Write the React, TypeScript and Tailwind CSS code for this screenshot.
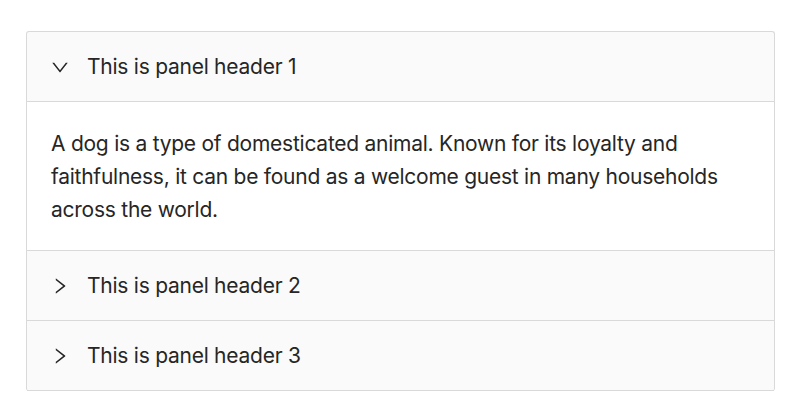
import React, { useState } from 'react';

const panels = [
  {
    key: '1',
    header: 'This is panel header 1',
    text: 'A dog is a type of domesticated animal. Known for its loyalty and faithfulness, it can be found as a welcome guest in many households across the world.',
  },
  {
    key: '2',
    header: 'This is panel header 2',
    text: 'A dog is a type of domesticated animal. Known for its loyalty and faithfulness, it can be found as a welcome guest in many households across the world.',
  },
  {
    key: '3',
    header: 'This is panel header 3',
    text: 'A dog is a type of domesticated animal. Known for its loyalty and faithfulness, it can be found as a welcome guest in many households across the world.',
  },
];

const Arrow: React.FC<{ open: boolean }> = ({ open }) => (
  <svg
    viewBox="64 64 896 896"
    width="18"
    height="18"
    fill="currentColor"
    className={open ? 'rotate-90 transition-transform' : 'transition-transform'}
  >
    <path d="M765.7 486.8L314.9 134.7A7.97 7.97 0 00302 141v77.3c0 4.9 2.3 9.6 6.1 12.6l360 281.1-360 281.1c-3.9 3-6.1 7.7-6.1 12.6V883c0 6.6 7.6 10.3 12.9 6.3l450.8-352.1a31.96 31.96 0 000-50.4z" />
  </svg>
);

export default function App() {
  const [active, setActive] = useState<string | null>('1');

  return (
    <div className="w-[800px] h-[418px] bg-white pt-[31px] pl-[26px] font-['Inter','Liberation_Sans',sans-serif] text-[21px] leading-[33px] tracking-[-0.25px] text-[#262626]">
      {/* collapse */}
      <div className="w-[749px] border border-b-0 border-[#d9d9d9] rounded-[3px] bg-[#fafafa]">
        {panels.map((p) => {
          const open = active === p.key;
          return (
            <div key={p.key} className="border-b border-[#d9d9d9]">
              <button
                onClick={() => setActive(open ? null : p.key)}
                className="w-full flex items-center px-6 pt-[18px] pb-[18px] text-left cursor-pointer"
              >
                <span className="mr-[18px] flex items-center">
                  <Arrow open={open} />
                </span>
                {p.header}
              </button>
              {open && (
                <div className="border-t border-[#d9d9d9] bg-white pt-[25px] pb-6 px-6">
                  <p>{p.text}</p>
                </div>
              )}
            </div>
          );
        })}
      </div>
    </div>
  );
}
